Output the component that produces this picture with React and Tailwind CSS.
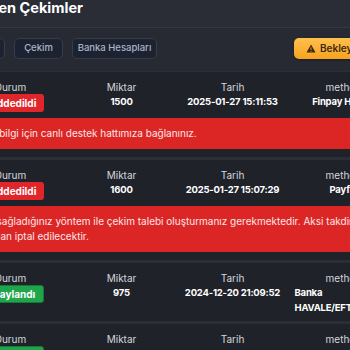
import { useState } from 'react';

const rows = [
  {
    status: 'Reddedildi',
    amount: '1500',
    date: '2025-01-27 15:11:53',
    method: ['Finpay Havale'],
    note: ['Detaylı bilgi için canlı destek hattımıza bağlanınız.'],
  },
  {
    status: 'Reddedildi',
    amount: '1600',
    date: '2025-01-27 15:07:29',
    method: ['Payfix'],
    note: [
      'Lütfen sağladığınız yöntem ile çekim talebi oluşturmanız gerekmektedir. Aksi takdirde çekim talebiniz',
      'tarafından iptal edilecektir.',
    ],
  },
  {
    status: 'Onaylandı',
    amount: '975',
    date: '2024-12-20 21:09:52',
    method: ['Banka', 'HAVALE/EFT'],
  },
  {
    status: 'Onaylandı',
    amount: '500',
    date: '2024-12-18 18:42:10',
    method: ['Papara'],
  },
];

function StatusBadge({ status }) {
  const ok = status === 'Onaylandı';
  return (
    <span
      className={`inline-flex h-[18px] items-center rounded-[3px] px-2 text-[10px] font-bold text-white ${
        ok ? 'bg-[#1fa64d] border border-[#147a36]' : 'bg-[#e0262a]'
      }`}
    >
      {status}
    </span>
  );
}

function Cell({ label, children }) {
  return (
    <div className="flex flex-col items-center">
      <span className="text-[10px] leading-[12px] text-[#d3d7de]">{label}</span>
      <div className="mt-[1px] flex min-h-[18px] items-start">{children}</div>
    </div>
  );
}

const valueCls = 'text-[9.5px] font-bold leading-[15px] tracking-[-0.2px] text-white';

function WithdrawRow({ row }) {
  const wraps = row.method.length > 1;
  return (
    <div className="bg-[#1f2229]">
      <div className="grid grid-cols-[111px_111px_111px_111px] pl-[5px] pt-[9px] pb-[6px]">
        <Cell label="Durum">
          <StatusBadge status={row.status} />
        </Cell>
        <Cell label="Miktar">
          <span className={valueCls}>{row.amount}</span>
        </Cell>
        <Cell label="Tarih">
          <span className={valueCls}>{row.date}</span>
        </Cell>
        <Cell label="method">
          <div className={`${valueCls} text-left ${wraps ? 'w-[98px]' : ''}`}>
            {row.method.map((m) => (
              <div key={m}>{m}</div>
            ))}
          </div>
        </Cell>
      </div>
      {row.note && (
        <div className="mb-[8px] bg-[#dc2626] px-[14px] py-[8px] text-[10px] leading-[15px] text-[#fde6e6]">
          {row.note.map((line, i) => (
            <div key={i} className="whitespace-nowrap">
              {line}
            </div>
          ))}
        </div>
      )}
    </div>
  );
}

export default function App() {
  const [tab] = useState('Çekim');
  return (
    <div
      className="h-[350px] w-[350px] overflow-hidden bg-[#282b34]"
      style={{ fontFamily: 'Inter, "Noto Sans", sans-serif' }}
    >
      <div className="-ml-[50px] w-[470px]">
        <div className="h-[28px] border-b border-[#343843] bg-[#2a2d36] pl-[1px]">
          <h1 className="text-[14.5px] font-bold leading-[16px] text-white">Bekleyen Çekimler</h1>
        </div>

        <div className="flex items-center justify-between bg-[#272a33] pt-[10px] pb-[12px] pl-[6px] pr-[6px]">
          <div className="flex items-center gap-[9px]">
            {[
              ['Yatırım', 'w-[49px]'],
              ['Çekim', 'w-[49px]'],
              ['Banka Hesapları', 'w-[85px]'],
            ].map(([t, w]) => (
              <button
                key={t}
                className={`h-[21px] ${w} rounded-[5px] border border-[#363d4a] bg-[#1c2230] text-center text-[9.5px] font-medium ${
                  t === tab ? 'text-[#aab6c7]' : 'text-[#a9b5c6]'
                }`}
              >
                {t}
              </button>
            ))}
          </div>
          <button className="flex h-[21px] w-[120px] items-center gap-[4px] rounded-[5px] bg-gradient-to-b from-[#ffc04d] to-[#f7a21b] pl-[12px] text-[10px] font-semibold text-[#3b2a0e] shadow-[0_1px_3px_rgba(0,0,0,0.35)]">
            <svg width="10" height="9" viewBox="0 0 24 22" fill="#3b2a0e">
              <path d="M12 1 L23 21 H1 Z" />
              <rect x="11" y="8" width="2" height="7" fill="#ffb23a" />
              <rect x="11" y="17" width="2" height="2" fill="#ffb23a" />
            </svg>
            Bekleyen Çekimler
          </button>
        </div>

        <div className="flex flex-col gap-[3px] bg-[#2b2e37] pt-[1px]">
          {rows.map((r, i) => (
            <WithdrawRow key={i} row={r} />
          ))}
        </div>
      </div>
    </div>
  );
}
